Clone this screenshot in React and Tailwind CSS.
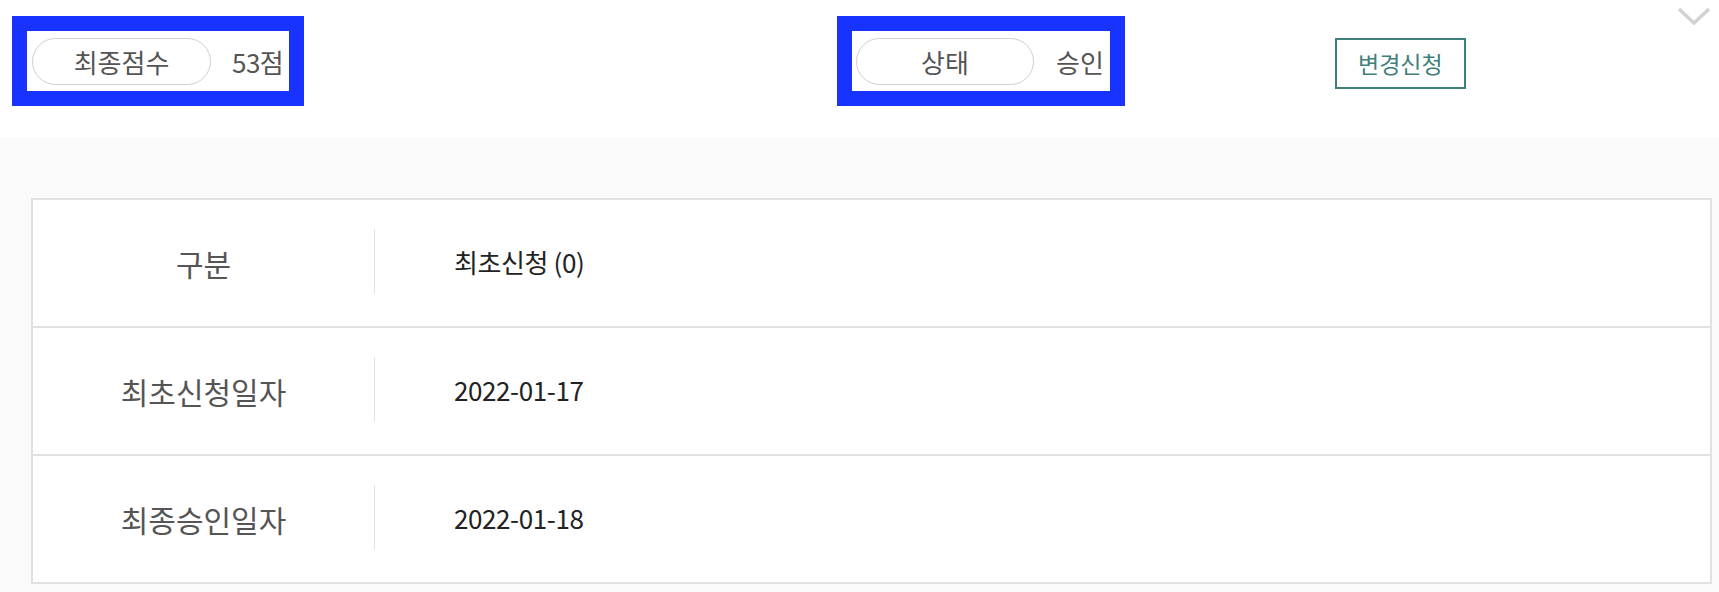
const font = { fontFamily: '"Noto Sans CJK KR", "Noto Sans", sans-serif' };

const rows = [
  { label: '구분', value: '최초신청 (0)' },
  { label: '최초신청일자', value: '2022-01-17' },
  { label: '최종승인일자', value: '2022-01-18' },
];

const Pill = ({ children, w }) => (
  <div className={`${w} h-[47px] rounded-full border-[1.5px] border-[#cfcfcf] flex items-center justify-center text-[26px] text-[#555]`}>
    {children}
  </div>
);

export default function App() {
  return (
    <div className="w-[1719px] h-[592px] overflow-hidden bg-[#fafafa]" style={font}>
      {/* summary bar */}
      <div className="relative h-[138px] bg-white pl-[12px] pt-[16px]">
        <div className="flex">
          <div className="w-[825px]">
            <div className="inline-flex items-center h-[90px] border-[15px] border-[#1833ff] pl-[5px] pr-[6px]">
              <Pill w="w-[179px]">최종점수</Pill>
              <span className="ml-[21px] text-[26px] text-[#555] tracking-[-0.5px]">53점</span>
            </div>
          </div>
          <div className="flex items-start">
            <div className="inline-flex items-center h-[90px] border-[15px] border-[#1833ff] pl-[4px] pr-[6px]">
              <Pill w="w-[178px]">상태</Pill>
              <span className="ml-[22px] text-[26px] text-[#555]">승인</span>
            </div>
            <button className="ml-[210px] mt-[22px] w-[131px] h-[51px] border-2 border-[#3f7f7b] text-[#3f7f7b] text-[23px] flex items-center justify-center">
              변경신청
            </button>
          </div>
        </div>
        <svg className="absolute right-[8px] top-[7px]" width="34" height="18" viewBox="0 0 34 18">
          <polyline points="2,2 17,16 32,2" fill="none" stroke="#d2d2d2" strokeWidth="3.5" />
        </svg>
      </div>

      {/* detail table */}
      <div className="pt-[60px] pl-[31px] pr-[7px]">
        <div className="border-2 border-[#e1e1e1] bg-white">
          {rows.map((r, i) => (
            <div
              key={r.label}
              className={`flex items-center h-[126px] ${i < rows.length - 1 ? 'border-b-2 border-[#e1e1e1] h-[128px]' : ''}`}
            >
              <div className="w-[341px] text-center text-[30px] text-[#555]">{r.label}</div>
              <div className="w-px h-[65px] bg-[#dfe3ea] -mt-[4px]" />
              <div className="pl-[79px] -mt-[4px] text-[26px] text-[#222] tracking-[-0.4px]">{r.value}</div>
            </div>
          ))}
        </div>
      </div>
    </div>
  );
}
